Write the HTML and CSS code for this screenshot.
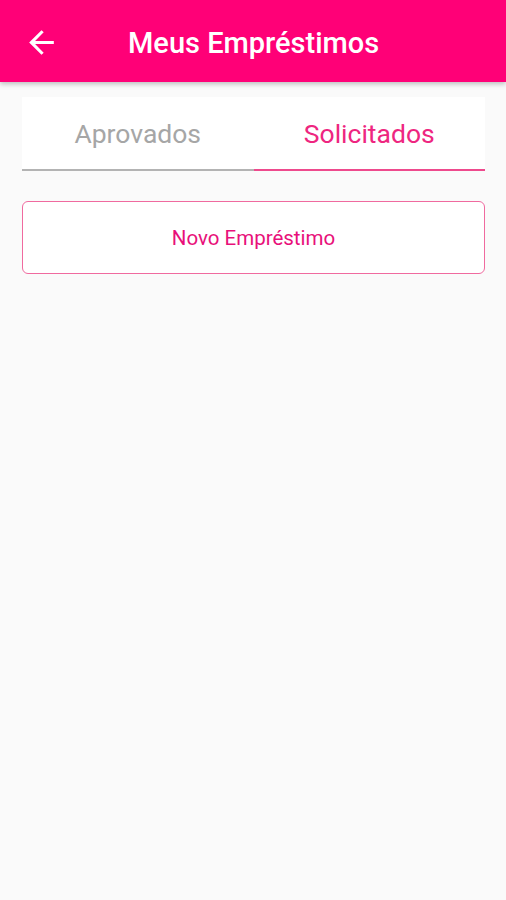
FILE: index.html
```html
<!DOCTYPE html>
<html lang="pt">
<head>
<meta charset="utf-8">
<link rel="stylesheet" href="styles.css">
</head>
<body>
<header class="appbar">
  <svg class="back" width="37" height="37" viewBox="0 0 24 24"><path d="M20 11H7.83l5.59-5.59L12 4l-8 8 8 8 1.41-1.41L7.83 13H20v-2z" fill="#fff"/></svg>
  <h1 class="title">Meus Empréstimos</h1>
</header>
<main class="content">
  <div class="tabs">
    <div class="tab">Aprovados</div>
    <div class="tab active">Solicitados</div>
  </div>
  <button class="new-btn">Novo Empréstimo</button>
</main>
</body>
</html>
```
FILE: styles.css
```css
html, body { margin: 0; padding: 0; }
body {
  background: #fafafa;
  font-family: Roboto, "Noto Sans", sans-serif;
  width: 506px;
  height: 900px;
  overflow: hidden;
}
.appbar {
  height: 82px;
  background: #ff0077;
  display: flex;
  align-items: center;
  box-shadow: 0 2px 5px rgba(0,0,0,0.25);
  position: relative;
}
.back { margin-left: 23px; margin-top: 2px; }
.title {
  margin: 4px 0 0 68px;
  color: #fff;
  font-size: 29px;
  font-weight: 500;
  letter-spacing: 0;
}
.content {
  padding: 15px 21px 0 22px;
  display: flex;
  flex-direction: column;
}
.tabs {
  display: flex;
  background: #fff;
  height: 74px;
}
.tab {
  flex: 1;
  display: flex;
  align-items: center;
  justify-content: center;
  font-size: 26.5px;
  color: #a6a6a6;
  border-bottom: 2px solid #b3b3b3;
  padding-top: 1px;
}
.tab.active {
  color: #ee2680;
  border-bottom-color: #ee4a8d;
}
.new-btn {
  margin-top: 30px;
  height: 73px;
  background: #fff;
  border: 1.5px solid #f06a9f;
  border-radius: 6px;
  color: #e8107a;
  font-family: Roboto, "Noto Sans", sans-serif;
  font-size: 20.5px;
  padding: 0;
}
```
